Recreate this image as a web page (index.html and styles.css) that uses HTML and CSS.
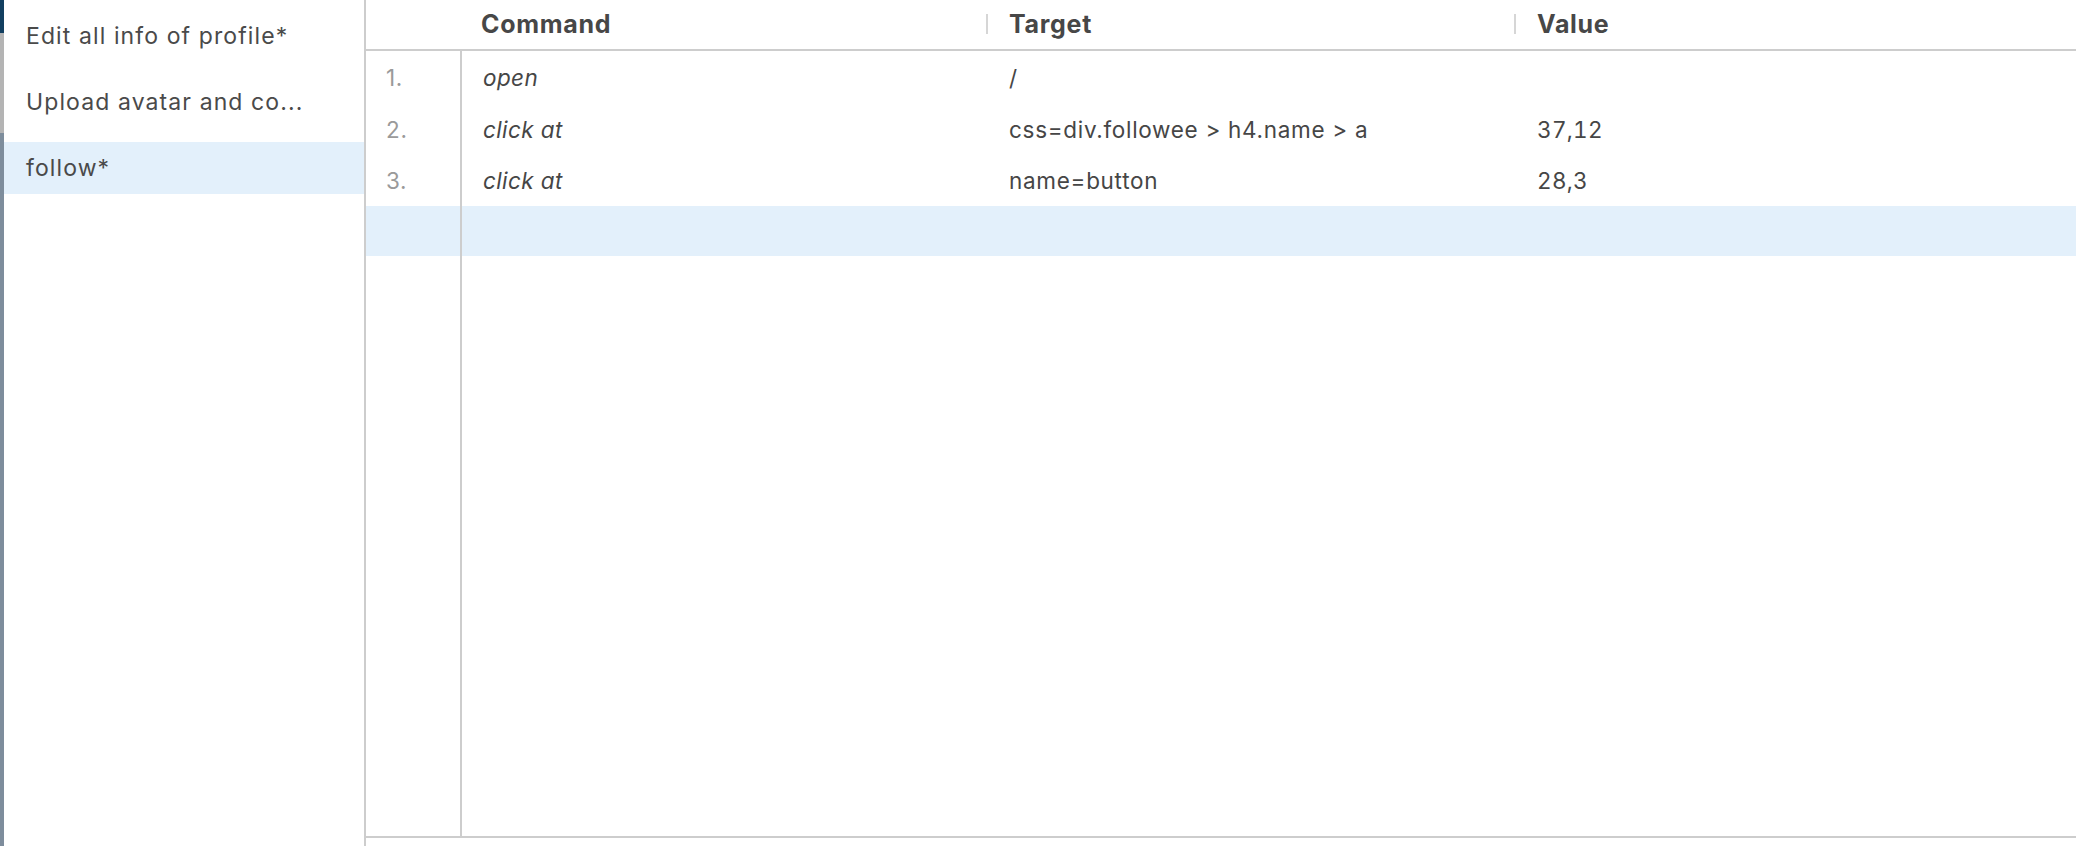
FILE: index.html
```html
<!DOCTYPE html>
<html>
<head>
<meta charset="utf-8">
<link rel="stylesheet" href="styles.css">
</head>
<body>
<div class="app">
  <div class="edge">
    <div class="edge-top"></div>
    <div class="edge-mid"></div>
    <div class="edge-low"></div>
  </div>
  <aside class="sidebar">
    <ul class="tests">
      <li class="test">Edit all info of profile*</li>
      <li class="test">Upload avatar and co...</li>
      <li class="test selected">follow*</li>
    </ul>
  </aside>
  <main class="editor">
    <div class="thead">
      <div class="cell num"></div>
      <div class="cell cmd">Command</div>
      <div class="cell target"><span class="sep"></span>Target</div>
      <div class="cell value"><span class="sep"></span>Value</div>
    </div>
    <div class="tbody">
      <div class="row r1">
        <div class="cell num">1.</div>
        <div class="cell cmd">open</div>
        <div class="cell target">/</div>
        <div class="cell value"></div>
      </div>
      <div class="row r2">
        <div class="cell num">2.</div>
        <div class="cell cmd">click at</div>
        <div class="cell target">css=div.followee &gt; h4.name &gt; a</div>
        <div class="cell value">37,12</div>
      </div>
      <div class="row r3">
        <div class="cell num">3.</div>
        <div class="cell cmd">click at</div>
        <div class="cell target">name=button</div>
        <div class="cell value">28,3</div>
      </div>
      <div class="row empty active">
        <div class="cell num"></div>
        <div class="cell cmd"></div>
        <div class="cell target"></div>
        <div class="cell value"></div>
      </div>
      <div class="filler">
        <div class="cell num"></div>
      </div>
    </div>
    <div class="tfoot"></div>
  </main>
</div>
</body>
</html>
```

FILE: styles.css
```css
html, body {
  margin: 0;
  padding: 0;
  background: #ffffff;
}

body {
  font-family: Inter, Roboto, "Liberation Sans", Arial, sans-serif;
  color: #484848;
}

.app {
  display: flex;
  width: 2076px;
  height: 846px;
  overflow: hidden;
}

.edge {
  width: 4px;
  display: flex;
  flex-direction: column;
  flex: none;
}

.edge-top { height: 33px; background: #123f60; }
.edge-mid { height: 100px; background: #b4b4b4; }
.edge-low { flex: 1; background: #7e8d9c; }

.sidebar {
  width: 360px;
  flex: none;
  border-right: 2px solid #cdcdcd;
  background: #ffffff;
}

.tests {
  list-style: none;
  margin: 0;
  padding: 10px 0 0;
  display: flex;
  flex-direction: column;
  gap: 14px;
}

.test {
  height: 52px;
  line-height: 52px;
  padding-left: 22px;
  font-size: 23px;
  letter-spacing: 1.1px;
  color: #4a4a4a;
  white-space: nowrap;
}

.test.selected {
  background: #e3f0fb;
}

.editor {
  flex: 1;
  display: flex;
  flex-direction: column;
  min-width: 0;
}

.thead {
  display: flex;
  height: 47px;
  padding-bottom: 2px;
  border-bottom: 2px solid #cdcdcd;
  align-items: center;
  font-weight: 700;
  font-size: 25px;
  letter-spacing: 0.7px;
  color: #474747;
  flex: none;
}

.cell {
  box-sizing: border-box;
  white-space: nowrap;
  flex: none;
}

.cell.num { width: 96px; padding-left: 20px; }
.cell.cmd { width: 524px; padding-left: 21px; }
.cell.target { width: 528px; padding-left: 23px; position: relative; }
.cell.value { flex: 1; padding-left: 23px; position: relative; }

.thead .cell.cmd { padding-left: 19px; }

.sep {
  position: absolute;
  left: 0;
  top: 50%;
  margin-top: -10px;
  width: 2px;
  height: 20px;
  background: #d6d6d6;
}

.tbody {
  height: 785px;
  display: flex;
  flex-direction: column;
  flex: none;
}

.row {
  display: flex;
  height: 52px;
  align-items: center;
  font-size: 22.5px;
  letter-spacing: 0.7px;
  color: #464646;
  flex: none;
}

.row.r3 { height: 51px; }
.row.empty { height: 50px; }

.row.active {
  background: #e3f0fb;
}

.row .cell.num {
  align-self: stretch;
  display: flex;
  align-items: center;
  border-right: 2px solid #cdcdcd;
  color: #9a9a9a;
}

.row .cell.cmd {
  font-style: italic;
  letter-spacing: 0.4px;
}

.row .cell.value {
  font-feature-settings: "tnum" 1;
  letter-spacing: 0.3px;
}

.filler {
  flex: 1;
  display: flex;
}

.filler .cell.num {
  border-right: 2px solid #cdcdcd;
}

.tfoot {
  flex: 1;
  border-top: 2px solid #cdcdcd;
}
```
